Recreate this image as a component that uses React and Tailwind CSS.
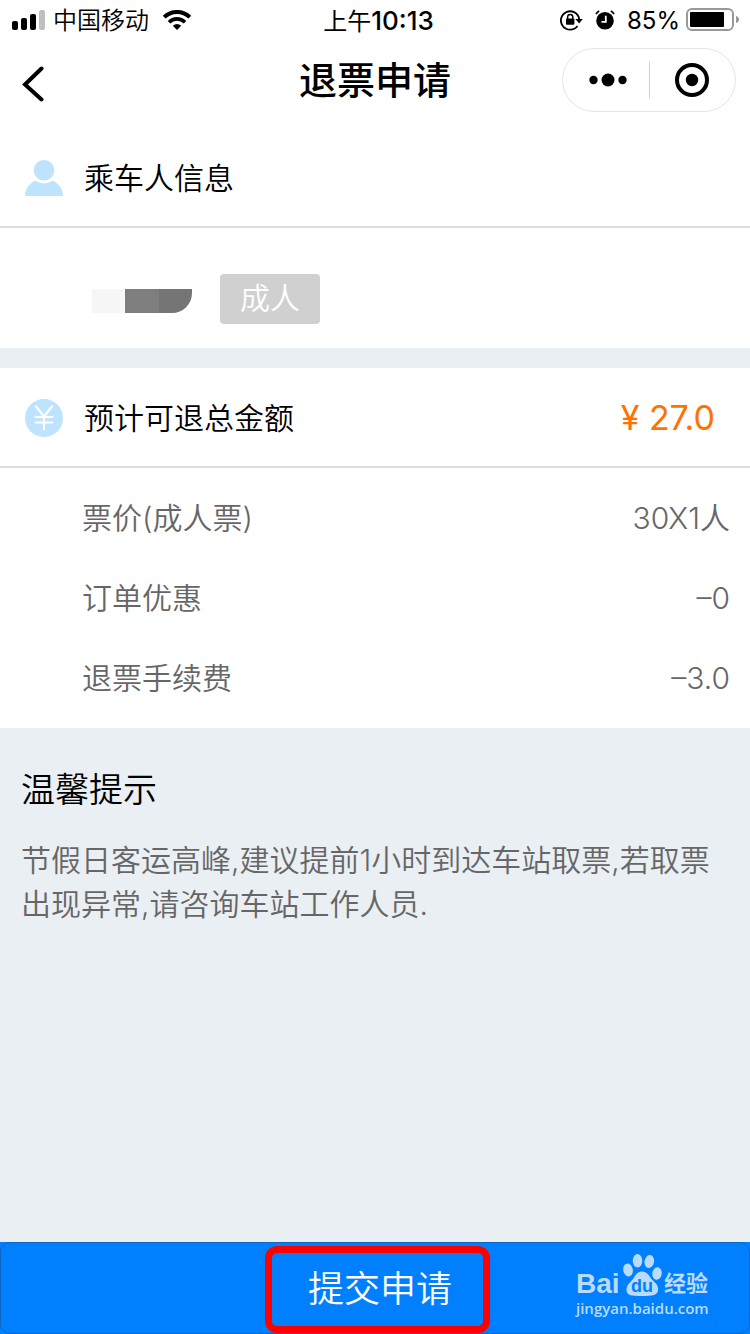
import React from 'react';

const FARES = [
  { label: '票价(成人票)', value: '30X1人' },
  { label: '订单优惠', value: '–0' },
  { label: '退票手续费', value: '–3.0' },
];

const SignalIcon = () => (
  <svg width="33" height="20" viewBox="0 0 33 20" aria-hidden="true">
    <rect x="0" y="11" width="6" height="9" rx="2" />
    <rect x="9" y="8" width="6" height="12" rx="2" />
    <rect x="18" y="4" width="6" height="16" rx="2" />
    <rect x="27" y="0" width="6" height="20" rx="2" fill="#bfbfbf" />
  </svg>
);

const WifiIcon = () => (
  <svg width="28" height="20" viewBox="0 0 28 20" fill="none" stroke="#000" aria-hidden="true">
    <path d="M1.2 7.2a18.2 18.2 0 0 1 25.6 0" strokeWidth="4" />
    <path d="M6 12.2a11.4 11.4 0 0 1 16 0" strokeWidth="3.6" />
    <path d="M9.8 15.7a6 6 0 0 1 8.4 0L14 20z" fill="#000" stroke="none" />
  </svg>
);

const LockIcon = () => (
  <svg width="23" height="22" viewBox="0 0 23 22" fill="none" stroke="#000" aria-hidden="true">
    <path d="M17.5 17A9.2 9.2 0 1 1 19.2 10" strokeWidth="1.8" />
    <path d="M15.4 10h7.4l-3.7 4.6z" fill="#000" stroke="none" />
    <path d="M7.6 10.5V8a2.6 2.6 0 0 1 5.2 0v2.5" strokeWidth="1.5" />
    <rect x="6" y="9.6" width="8.4" height="6.2" rx="1" fill="#000" stroke="none" />
  </svg>
);

const AlarmIcon = () => (
  <svg width="20" height="20" viewBox="0 0 20 20" fill="none" aria-hidden="true">
    <circle cx="10" cy="10.8" r="8.8" fill="#000" />
    <path d="M1 4.2Q2 2 4.2 1M19 4.2Q18 2 15.8 1" stroke="#000" strokeWidth="1.6" />
    <path d="M10.8 5.8v6H6.5" stroke="#fff" strokeWidth="1.8" />
  </svg>
);

const BatteryIcon = () => (
  <svg width="53" height="24" viewBox="0 0 53 24" aria-hidden="true">
    <rect x="1" y="1" width="46" height="21" rx="5" fill="none" stroke="#999" strokeWidth="2" />
    <rect x="4" y="4" width="34" height="15" rx="1" />
    <path d="M50 8q3 1 3 3.500t-3 3.500z" fill="#999" />
  </svg>
);

const PassengerIcon = () => (
  <svg width="38" height="36" viewBox="0 0 38 36" fill="#bee3ff" aria-hidden="true">
    <circle cx="19" cy="10.300" r="10.300" />
    <path d="M0 36C.5 28 4.500 23 10.500 20.800Q19 26 27.500 20.800C33.500 23 37.500 28 38 36z" />
  </svg>
);

const YuanIcon = () => (
  <svg width="38" height="38" viewBox="0 0 38 38" aria-hidden="true">
    <circle cx="19" cy="19" r="19" fill="#bee3ff" />
    <path
      d="M11 7.500l8 10 8-10M19 17.500v13M10.500 18h17M10.500 23.500h17"
      fill="none"
      stroke="#fff"
      strokeWidth="2.200"
      strokeLinecap="round"
    />
  </svg>
);

const PawLogo = () => (
  <svg className="self-start" width="40" height="42" viewBox="0 0 40 42" fill="#b9dbff" aria-hidden="true">
    <ellipse cx="6" cy="16" rx="4.800" ry="6.500" transform="rotate(-12 6 16)" />
    <ellipse cx="15.500" cy="6.700" rx="4.800" ry="6.700" />
    <ellipse cx="27.300" cy="7.500" rx="4.800" ry="6.500" transform="rotate(10 27.300 7.500)" />
    <ellipse cx="35" cy="19.500" rx="4.700" ry="6.300" transform="rotate(8 35 19.500)" />
    <path d="M20 17.500c5 0 7 4 9.500 7.500 3 3.500 7.500 6 6.500 11.500-1 5-6 5.500-16 5.500s-15-.5-15.500-5.500c-.5-5.500 4-8 6.500-11.500 2.500-3.500 4-7.500 9-7.500z" />
    <text
      x="20"
      y="38"
      textAnchor="middle"
      fill="#0080ff"
      className="text-[18px] font-bold font-['Liberation_Sans',sans-serif]"
    >
      du
    </text>
  </svg>
);

const StatusBar = () => (
  <div className="grid grid-cols-[1fr_auto_1fr] items-center h-10 pl-3 pr-[11px] text-2xl">
    <div className="flex items-center">
      <SignalIcon />
      <span className="ml-2 mr-3.5 pt-0.5">中国移动</span>
      <WifiIcon />
    </div>
    <span className="pl-1.5 pt-0.5 font-normal">上午<span className="text-[26px] font-medium">10:13</span></span>
    <div className="flex items-center justify-end">
      <LockIcon />
      <span className="mx-3"><AlarmIcon /></span>
      <span className="mr-1.5 pt-0.5 font-normal">85%</span>
      <BatteryIcon />
    </div>
  </div>
);

const NavBar = () => (
  <header className="grid grid-cols-[1fr_auto_1fr] items-center h-20 px-3.5">
    <button type="button" aria-label="返回" className="justify-self-start pt-2 pl-1.5">
      <svg width="26" height="36" viewBox="0 0 26 36" fill="none" stroke="#000" strokeWidth="4">
        <path d="M21.500 2.500L5 18.500l16.500 15" strokeLinecap="round" />
      </svg>
    </button>
    <h1 className="text-[38px] leading-none font-medium">退票申请</h1>
    <div className="grid grid-cols-[1fr_auto_1fr] items-center justify-self-end w-[174px] h-16 border border-[#e5e5e5] rounded-full">
      <button type="button" aria-label="更多" className="flex justify-center pl-1">
        <svg width="38" height="14" viewBox="0 0 38 14">
          <circle cx="4.500" cy="7" r="4.200" />
          <circle cx="19" cy="7" r="6.500" />
          <circle cx="33.500" cy="7" r="4.200" />
        </svg>
      </button>
      <span className="w-px h-9 bg-[#d0d0d0]" />
      <button type="button" aria-label="关闭" className="flex justify-center">
        <svg width="36" height="36" viewBox="0 0 36 36">
          <circle cx="18" cy="18" r="15" fill="none" stroke="#000" strokeWidth="4" />
          <circle cx="18" cy="18" r="6.200" />
        </svg>
      </button>
    </div>
  </header>
);

const SectionTitle = ({ icon, title, children }) => (
  <div className="flex items-center h-[100px] pt-0.5 pl-[25px] pr-[35px] border-b-2 border-[#dcdcdc]">
    {icon}
    <h2 className="ml-[21px] flex-1">{title}</h2>
    {children}
  </div>
);

const Watermark = () => (
  <div className="absolute right-[42px] bottom-4 w-[132px] text-[#b9dbff] font-['Liberation_Sans','Noto_Sans_CJK_SC',sans-serif] pointer-events-none">
    <div className="flex items-end justify-between h-11">
      <span className="text-[28px] leading-7 font-bold">Bai</span>
      <PawLogo />
      <span className="text-[22px] leading-7 font-bold">经验</span>
    </div>
    <div className="text-[15px] leading-5 font-semibold font-['Open_Sans',sans-serif]">jingyan.baidu.com</div>
  </div>
);

const App = () => {
  return (
    <div className="flex flex-col min-h-screen bg-[#eaeff3] text-black text-[30px] leading-[44px] font-[350] font-['Inter','Noto_Sans_CJK_SC',sans-serif]">
      <div className="bg-white pb-2">
        <StatusBar />
        <NavBar />
      </div>

      <section className="bg-white">
        <SectionTitle icon={<PassengerIcon />} title="乘车人信息" />
        <div className="flex items-center h-[120px] pt-[22px] pl-[92px]">
          <div className="flex w-[100px] h-6 mt-1 rounded-br-[20px] overflow-hidden">
            <span className="flex-1 bg-[#f7f7f7]" />
            <span className="flex-1 bg-[#7e7e7e]" />
            <span className="flex-1 bg-[#757575]" />
          </div>
          <span className="flex items-center justify-center w-[100px] h-[50px] ml-7 pb-0.5 rounded-sm bg-[#d0d0d0] text-white">
            成人
          </span>
        </div>
      </section>

      <section className="bg-white mt-5">
        <SectionTitle icon={<YuanIcon />} title="预计可退总金额">
          <span className="text-[34px] text-[#ff7200] font-normal">¥ 27.0</span>
        </SectionTitle>
        <dl className="py-2.5 text-[#666]">
          {FARES.map(fare => (
            <div key={fare.label} className="flex items-center justify-between h-20 pl-[82px] pr-5">
              <dt>{fare.label}</dt>
              <dd>{fare.value}</dd>
            </div>
          ))}
        </dl>
      </section>

      <section className="flex-1 px-[21px] pt-10">
        <h2 className="text-[34px]">温馨提示</h2>
        <p className="mt-[26px] text-[#666]">
          节假日客运高峰,建议提前1小时到达车站取票,若取票出现异常,请咨询车站工作人员.
        </p>
      </section>

      <footer className="relative bg-[#0080ff]">
        <button
          type="button"
          className="flex items-center justify-center w-full h-[92px] pl-2.5 pt-0.5 border border-[#0d68bd] rounded-[10px] text-white text-4xl"
        >
          提交申请
        </button>
        <div className="absolute top-1 bottom-px left-1/2 w-[225px] -ml-[110px] border-[7px] border-[#ff0000] rounded-xl pointer-events-none" />
        <Watermark />
      </footer>
    </div>
  );
};

export default App;
